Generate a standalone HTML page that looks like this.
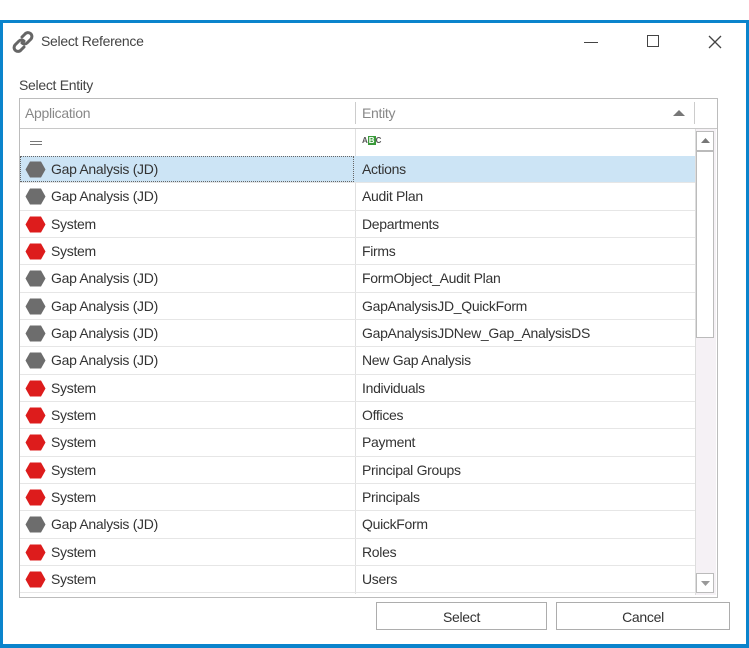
<!DOCTYPE html>
<html><head><style>
body{margin:0;width:749px;height:648px;background:#fff;position:relative;overflow:hidden;font-family:"Liberation Sans",sans-serif;font-size:14px;color:#333;letter-spacing:-0.3px}
.a{position:absolute}
.row{position:absolute;left:20px;width:675px;height:27.33px;border-bottom:1px solid #e6e6e6;box-sizing:border-box}
.row .c1{position:absolute;left:31px;top:5px}
.row .c2{position:absolute;left:342px;top:5px}
.row svg{position:absolute;left:5px;top:5px}
.btn{position:absolute;border:1px solid #adadad;background:#fff;text-align:center;line-height:28px;height:28px;box-sizing:border-box}
</style></head><body>
<div class="a" style="left:0;top:20px;width:749px;height:628px;background:#0a84cc"></div>
<div class="a" style="left:3px;top:23px;width:743px;height:621px;background:#fff"></div>
<svg class="a" style="left:12px;top:31px" width="22" height="22" viewBox="0 0 22 22"><g fill="none" stroke="#666" stroke-width="3" stroke-linecap="round"><path d="M10 6 L13 3 A3.5 3.5 0 0 1 19 8 L15 12 A3.5 3.5 0 0 1 10 12"/><path d="M12 16 L9 19 A3.5 3.5 0 0 1 3 14 L7 10 A3.5 3.5 0 0 1 12 10"/></g></svg>
<div class="a" style="left:41px;top:33px;color:#444">Select Reference</div>
<div class="a" style="left:584px;top:42px;width:14px;height:1px;background:#444"></div>
<div class="a" style="left:647px;top:35px;width:12px;height:12px;border:1px solid #444;box-sizing:border-box"></div>
<svg class="a" style="left:708px;top:35px" width="14" height="14"><path d="M1 1L13 13M13 1L1 13" stroke="#444" stroke-width="1.3"/></svg>
<div class="a" style="left:19px;top:77px;color:#444">Select Entity</div>
<div class="a" style="left:19px;top:98px;width:699px;height:500px;border:1px solid #bcbcbc;box-sizing:border-box"></div>
<div class="a" style="left:20px;top:128px;width:697px;height:1px;background:#c8c8c8"></div>
<div class="a" style="left:25px;top:105px;color:#888">Application</div>
<div class="a" style="left:355px;top:102px;width:1px;height:22px;background:#ccc"></div>
<div class="a" style="left:362px;top:105px;color:#888">Entity</div>
<svg class="a" style="left:673px;top:109px" width="12" height="7"><path d="M0 7L6 1L12 7Z" fill="#777"/></svg>
<div class="a" style="left:694px;top:102px;width:1px;height:22px;background:#ccc"></div>
<div class="a" style="left:30px;top:141px;width:12px;height:1px;background:#777"></div>
<div class="a" style="left:30px;top:144px;width:12px;height:1px;background:#777"></div>
<div class="a" style="left:362px;top:136px;font-size:8px;line-height:10px;color:#555;font-weight:bold;letter-spacing:0">A<span style="background:#3a9a3a;color:#fff;padding:0 1px">B</span>C</div>
<div class="a" style="left:355px;top:129px;width:1px;height:465px;background:#e0e0e0"></div>
<div class="a" style="left:20px;top:156px;width:675px;height:27px;background:#cce4f5"></div>
<div class="a" style="left:20px;top:156px;width:334px;height:26px;border:1px dotted #666;box-sizing:border-box"></div>
<div id="rows"></div>
<div class="a" style="left:695px;top:129px;width:21px;height:466px;background:#f5f1f5;border-left:1px solid #ddd;box-sizing:border-box"></div>
<div class="a" style="left:696px;top:131px;width:18px;height:20px;border:1px solid #bbb;background:#fff;box-sizing:border-box"></div>
<svg class="a" style="left:701px;top:138px" width="9" height="5"><path d="M0 5L4.5 0L9 5Z" fill="#777"/></svg>
<div class="a" style="left:696px;top:151px;width:18px;height:187px;border:1px solid #bbb;background:#fff;box-sizing:border-box"></div>
<div class="a" style="left:696px;top:573px;width:18px;height:20px;border:1px solid #bbb;background:#fff;box-sizing:border-box"></div>
<svg class="a" style="left:701px;top:581px" width="9" height="5"><path d="M0 0L4.5 5L9 0Z" fill="#999"/></svg>
<div class="btn" style="left:376px;top:602px;width:171px">Select</div>
<div class="btn" style="left:556px;top:602px;width:174px">Cancel</div>
<script>
var d=[["g","Actions"],["g","Audit Plan"],["r","Departments"],["r","Firms"],["g","FormObject_Audit Plan"],["g","GapAnalysisJD_QuickForm"],["g","GapAnalysisJDNew_Gap_AnalysisDS"],["g","New Gap Analysis"],["r","Individuals"],["r","Offices"],["r","Payment"],["r","Principal Groups"],["r","Principals"],["g","QuickForm"],["r","Roles"],["r","Users"]];
var h="";d.forEach(function(r,i){var c=r[0]=="g"?"#6d6d6d":"#dd1c1c";var n=r[0]=="g"?"Gap Analysis (JD)":"System";
h+='<div class="row" style="top:'+(156+i*27.33)+'px"><svg width="21" height="17"><path d="M5 0.5H16L20.5 8.5L16 16.5H5L0.5 8.5Z" fill="'+c+'"/></svg><span class="c1">'+n+'</span><span class="c2">'+r[1]+'</span></div>';});
document.getElementById("rows").innerHTML=h;
</script>
</body></html>
